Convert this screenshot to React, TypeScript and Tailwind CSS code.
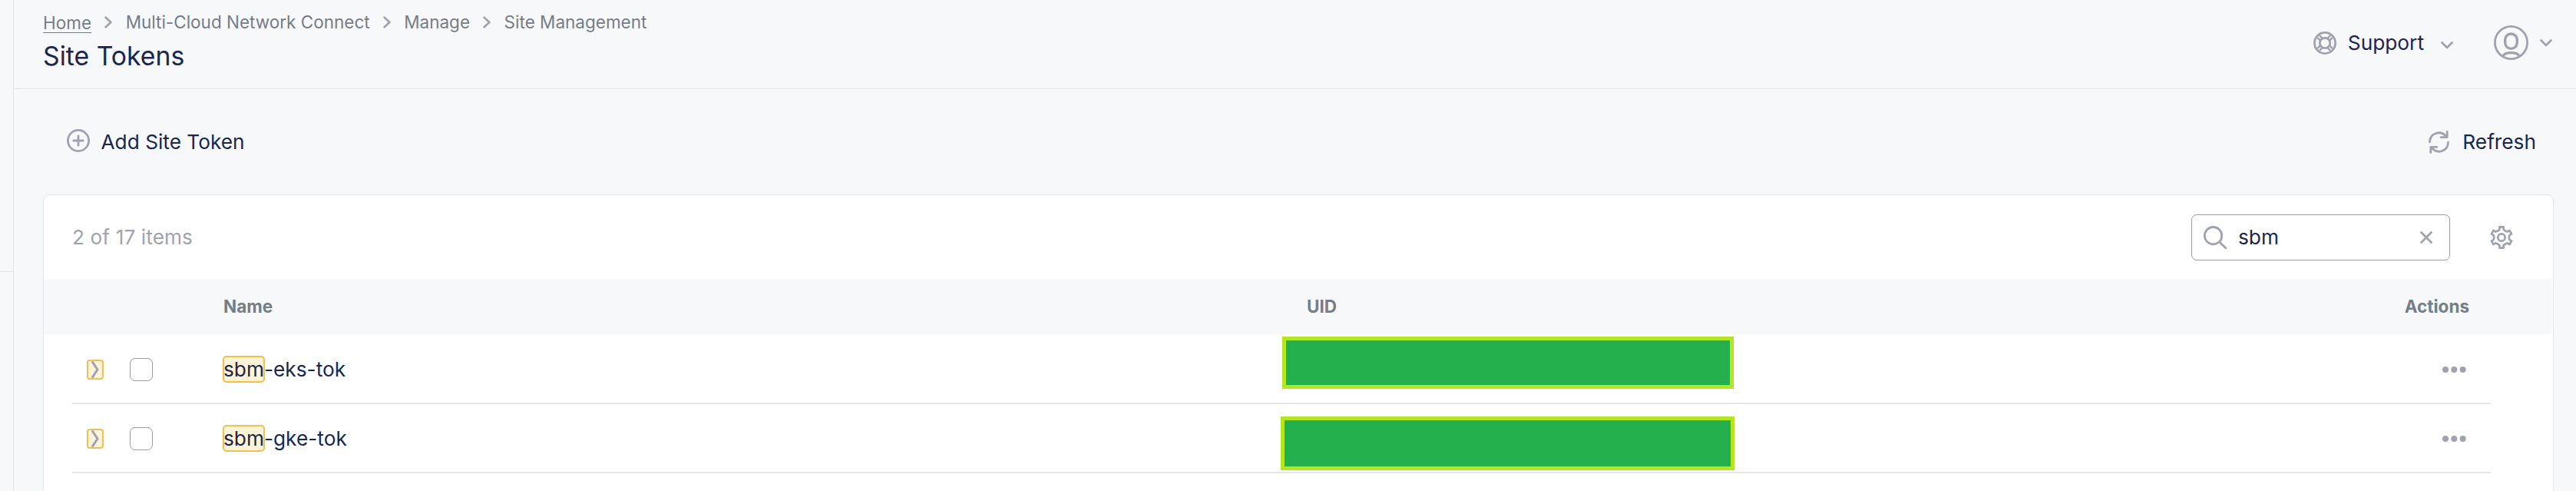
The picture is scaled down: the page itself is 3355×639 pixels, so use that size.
import { Fragment, useState } from "react";

const crumbs = ["Home", "Multi-Cloud Network Connect", "Manage", "Site Management"];

const rows = [
  { name: "sbm-eks-tok", height: "h-[91px]", mask: "mt-px ml-0 h-[68px] w-[588px]" },
  { name: "sbm-gke-tok", height: "h-[90px]", mask: "mt-[14px] -ml-[2px] h-[70px] w-[591px]" },
];

const gearPath =
  [0, 60, 120, 180, 240, 300]
    .map((deg) => {
      const a = (deg * Math.PI) / 180;
      return [[-3.9, -9.2], [-2.6, -10.4], [-2.6, -13.6], [2.6, -13.6], [2.6, -10.4], [3.9, -9.2]]
        .map(([x, y]) => `${(x * Math.cos(a) - y * Math.sin(a)).toFixed(2)} ${(x * Math.sin(a) + y * Math.cos(a)).toFixed(2)}`)
        .join("L");
    })
    .reduce((path, tooth) => `${path}${path ? "L" : "M"}${tooth}`, "") + "Z";

function ChevronRight() {
  return (
    <svg className="h-4 w-[10px] text-[#9fa3b0]" viewBox="0 0 10 16" fill="none" stroke="currentColor" strokeWidth="2.7" strokeLinecap="round" strokeLinejoin="round">
      <path d="M1.6 1.8 8.4 8 1.6 14.2" />
    </svg>
  );
}

function ChevronDown() {
  return (
    <svg className="h-[10px] w-4" viewBox="0 0 16 10" fill="none" stroke="currentColor" strokeWidth="2.7" strokeLinecap="round" strokeLinejoin="round">
      <path d="M1.5 1.5 8 8 14.5 1.5" />
    </svg>
  );
}

function PlusCircle() {
  return (
    <svg className="size-[30px]" viewBox="0 0 30 30" fill="none" stroke="currentColor" strokeWidth="2.8" strokeLinecap="round">
      <circle cx="15" cy="15" r="13.6" />
      <path d="M8.8 15h12.4M15 8.8v12.4" />
    </svg>
  );
}

function Lifebuoy() {
  return (
    <svg className="size-[30px]" viewBox="0 0 30 30" fill="none" stroke="currentColor" strokeWidth="2.8">
      <circle cx="15" cy="15" r="13.6" />
      <circle cx="15" cy="15" r="6.7" />
      <path d="m7.9 5.1 3.9 3.9M5.1 7.9 9 11.8M22.1 5.1 18.2 9M24.9 7.9 21 11.8M7.9 24.9l3.900-3.900M5.100 22.100 9 18.200M22.100 24.900 18.200 21M24.900 22.100 21 18.200" strokeWidth="2.4" />
    </svg>
  );
}

function UserCircle() {
  return (
    <svg className="size-[45px]" viewBox="0 0 45 45" fill="none" stroke="currentColor" strokeWidth="2.8">
      <circle cx="22.5" cy="22.5" r="21.1" />
      <rect x="14.7" y="11" width="15.6" height="19.4" rx="7.8" strokeWidth="3.4" />
      <path d="M11.6 40.2c1.8-3.4 5.6-4.6 10.9-4.6s9.1 1.2 10.9 4.6" strokeWidth="3.2" />
    </svg>
  );
}

function RefreshArrows() {
  return (
    <svg className="h-[30px] w-[27px]" viewBox="0 0 27 30" fill="none" stroke="currentColor" strokeWidth="2.8" strokeLinecap="round" strokeLinejoin="round">
      <path d="M1.5 14.8A12 12 0 0 1 22 6.4" />
      <path d="M24.2 1.5v7.2h-8" />
      <path d="M25.5 15.2A12 12 0 0 1 5 23.6" />
      <path d="M2.8 28.5v-7.2h8" />
    </svg>
  );
}

function Magnifier() {
  return (
    <svg className="size-[30px] text-[#9fa3b0]" viewBox="0 0 30 30" fill="none" stroke="currentColor" strokeWidth="2.8" strokeLinecap="round">
      <circle cx="12.5" cy="12.7" r="11.2" />
      <path d="m20.8 21 7.8 7.8" />
    </svg>
  );
}

function Gear() {
  return (
    <svg className="h-8 w-[30px]" viewBox="-15 -16 30 32" fill="none" stroke="currentColor" strokeWidth="2.7" strokeLinejoin="round">
      <circle r="4.7" />
      <path d={gearPath} />
    </svg>
  );
}

function Highlighted({ text, term }: { text: string; term: string }) {
  const at = text.indexOf(term);
  if (!term || at < 0) return <>{text}</>;
  return (
    <>
      {text.slice(0, at)}
      <mark className="rounded-[4px] bg-[#fef3d6] py-px text-inherit outline-2 -outline-offset-1 outline-[#efc055]">{term}</mark>
      {text.slice(at + term.length)}
    </>
  );
}

export default function App() {
  const [query, setQuery] = useState("sbm");
  return (
    <div className="flex h-[639px] w-full overflow-hidden bg-[#f7f8fa] font-['Inter',sans-serif] text-[26.25px] text-[#1b264f]">
      <aside className="w-[18px] shrink-0 border-r border-[#e2e4ea]">
        <div className="h-[354px] border-b border-[#e2e4ea]" />
      </aside>

      <div className="flex min-w-0 flex-1 flex-col">
        <header className="flex h-[116px] shrink-0 justify-between border-b border-[#e2e4ea] pr-[31px] pl-[38px]">
          <div className="flex flex-col pt-[15px]">
            <nav className="flex items-center gap-[17.3px] text-[22.5px] leading-7 text-[#757d88]">
              {crumbs.map((label, i) => (
                <Fragment key={label}>
                  {i > 0 && <ChevronRight />}
                  <a className={i === 0 ? "h-[27px] border-b border-[#757d88]" : ""}>{label}</a>
                </Fragment>
              ))}
            </nav>
            <h1 className="mt-1 text-[33.75px] leading-[52px]">Site Tokens</h1>
          </div>
          <div className="flex h-[111px] items-center text-[#9fa3b0]">
            <Lifebuoy />
            <span className="ml-[15px] text-[#1b264f]">Support</span>
            <span className="mt-[6px] ml-[22px]"><ChevronDown /></span>
            <span className="ml-[53px]"><UserCircle /></span>
            <span className="ml-[15px]"><ChevronDown /></span>
          </div>
        </header>

        <main className="flex flex-1 flex-col pr-[29px] pl-[38px]">
          <div className="flex h-[137px] shrink-0 items-center justify-between pr-[23px] pl-[31px] text-[#9fa3b0]">
            <button className="flex items-center gap-[14.5px]">
              <span className="-mt-1"><PlusCircle /></span>
              <span className="text-[#1b264f]">Add Site Token</span>
            </button>
            <button className="flex items-center gap-[17px]">
              <RefreshArrows />
              <span className="text-[#1b264f]">Refresh</span>
            </button>
          </div>

          <section className="flex h-[420px] shrink-0 flex-col rounded-t-lg border border-[#e2e4ea] bg-white">
            <div className="flex h-[109px] items-center pr-[51px] pl-[37px]">
              <span className="mr-auto tracking-[0.08px] text-[#9fa3b0]">2 of 17 items</span>
              <label className="flex h-[60px] w-[337px] items-center rounded-[7px] border border-[#9a9ca5] pr-[22px] pl-[15px]">
                <Magnifier />
                <input
                  className="ml-[15px] w-0 flex-1 outline-none"
                  value={query}
                  onChange={(e) => setQuery(e.target.value)}
                />
                <button className="text-[#9fa3b0]" onClick={() => setQuery("")}>
                  <svg className="size-4" viewBox="0 0 16 16" fill="none" stroke="currentColor" strokeWidth="2.8" strokeLinecap="round">
                    <path d="m1.5 1.5 13 13M14.5 1.5l-13 13" />
                  </svg>
                </button>
              </label>
              <button className="mr-px ml-[52px] text-[#9fa3b0]"><Gear /></button>
            </div>

            <div className="mr-[2px] flex h-[72px] shrink-0 items-center bg-[#f7f8fa] pr-[107px] pl-[234px] text-[22.5px] font-bold text-[#757d88]">
              <span className="w-[1411px]">Name</span>
              <span className="mr-auto">UID</span>
              <span>Actions</span>
            </div>

            {rows.map((row) => (
              <div key={row.name} className={`ml-[37px] flex w-[3150px] shrink-0 items-center border-b-2 border-[#e5e6e9] pt-[2px] pl-[19px] ${row.height}`}>
                <span className="flex h-[26px] w-[22px] items-center justify-center rounded-[4px] border-2 border-[#efc055] bg-[#fef3d6]">
                  <svg className="h-[22px] w-3" viewBox="0 0 12 22" fill="none" stroke="#9fa3b0" strokeWidth="3">
                    <path d="M2 .4 9 11 2 21.6" />
                  </svg>
                </span>
                <span className="ml-[34px] size-[30px] rounded-[7px] border border-[#9a9ca5] bg-white" />
                <span className="ml-[92px] w-[1379px]">
                  <Highlighted text={row.name} term={query} />
                </span>
                <span className={`self-start border-[5px] border-[#b2e61d] bg-[#24b14d] ${row.mask}`} />
                <svg className="mr-[32px] ml-auto h-2 w-[31px] fill-[#9fa3b0]" viewBox="0 0 31 8">
                  <circle cx="4" cy="4" r="4" />
                  <circle cx="15.3" cy="4" r="4" />
                  <circle cx="26.6" cy="4" r="4" />
                </svg>
              </div>
            ))}
          </section>
        </main>
      </div>
    </div>
  );
}
